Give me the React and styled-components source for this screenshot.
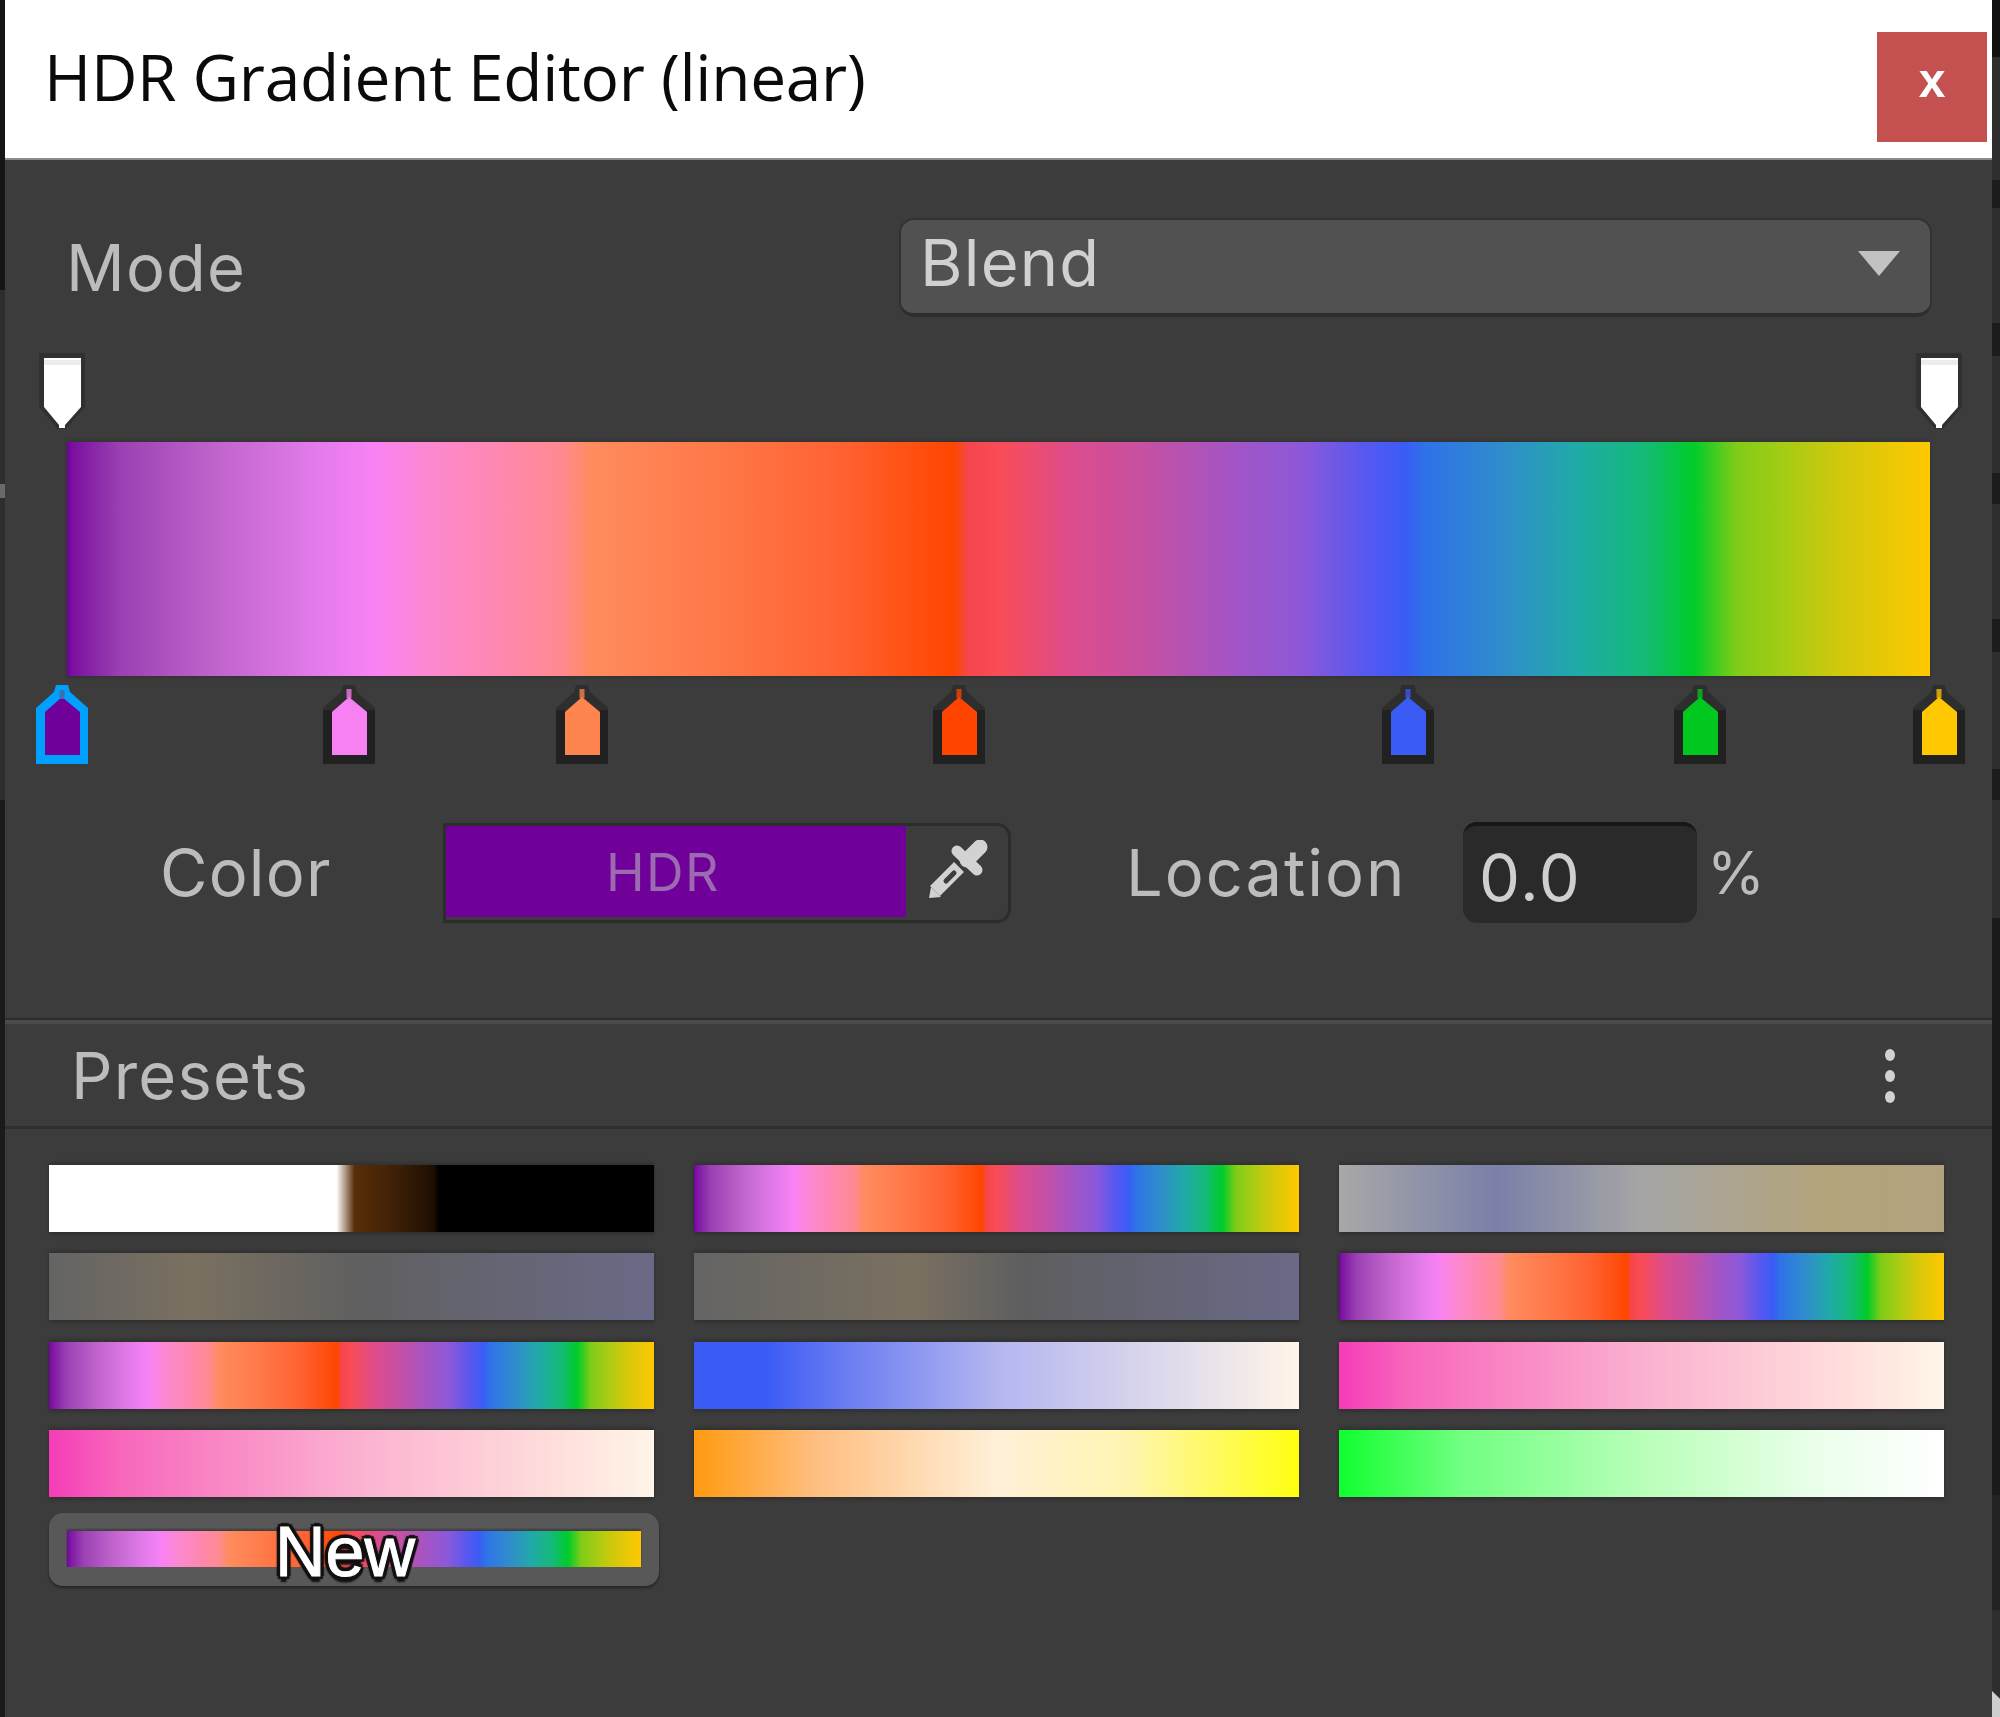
import React from "react";
import styled, { createGlobalStyle } from "styled-components";

const RAINBOW = `#6f0098 0%, #7a10a0 .3%, #9a40b2 2.8%, #c064cc 8%, #e07ae8 13%, #f882f5 16.4%, #fc88d0 19.4%, #ff88a8 24%, #ff8a90 26.6%, #ff8b5e 28.2%, #ff7848 35%, #ff6232 41.5%, #ff4600 47.6%, #f5464e 48.4%, #f94c56 50%, #dc4c8e 54%, #c850a0 57.5%, #a055c8 63%, #8e58d8 66.2%, #5858f0 69.6%, #3a5cf5 71.8%, #2f72e8 72.9%, #2f90c8 77.5%, #20aaa8 81%, #14ba78 84.6%, #00cc2a 87.3%, #80cc18 89.6%, #a8cc14 92.4%, #d4c80c 95.4%, #ffc800 100%`;
const grad = (stops) => `linear-gradient(90deg, ${stops})`;

const Global = createGlobalStyle`
  html, body { margin: 0; padding: 0; background: #3c3c3c; }
  * { box-sizing: border-box; }
`;

const Page = styled.div`
  width: 2000px;
  height: 1717px;
  display: grid;
  grid-template-columns: 5px 1987px 8px;
  overflow: hidden;
  filter: blur(0.7px);
`;

const Edge = styled.div`
  position: relative;
  height: 100%;
  background: ${(p) => p.$fill};
`;

const ResizeCorner = styled.div`
  position: absolute;
  right: 0;
  bottom: 0;
  width: 8px;
  height: 26px;
  background: #cfcfcf;
  clip-path: polygon(0 0, 100% 30%, 100% 100%, 0 100%);
`;

const EdgeTick = styled.div`
  position: absolute;
  left: 0;
  top: 484px;
  width: 5px;
  height: 14px;
  background: #6a6a6a;
`;

const Window = styled.div`
  display: flex;
  flex-direction: column;
  background: #3c3c3c;
  color: #c4c4c4;
  font-family: Inter, "Liberation Sans", sans-serif;
`;

const TitleBar = styled.header`
  height: 160px;
  background: #fff;
  display: flex;
  justify-content: space-between;
  align-items: flex-start;
  padding: 32px 5px 0 39px;
  border-bottom: 2px solid #8a8a8a;
`;

const Title = styled.h1`
  margin: 0;
  font: 400 64px/90px "Open Sans", sans-serif;
  letter-spacing: -0.3px;
  color: #0a0a0a;
`;

const CloseButton = styled.button`
  width: 110px;
  height: 110px;
  border: 0;
  padding: 0 0 12px;
  background: #c55050;
  color: #fff;
  font: 700 48px/1 "Liberation Sans", sans-serif;
`;

const ModeRow = styled.div`
  display: flex;
  justify-content: space-between;
  align-items: center;
  height: 99px;
  margin-top: 58px;
  padding: 0 60px 0 61px;
`;

const Label = styled.span`
  font-size: 65px;
  line-height: 1;
  font-weight: 400;
  letter-spacing: ${(p) => p.$spacing ?? 1.2}px;
  color: #bcbcbc;
`;

const ModeLabel = styled(Label)`
  margin-top: 0;
`;

const Dropdown = styled.div`
  width: 1033px;
  height: 99px;
  display: flex;
  align-items: center;
  justify-content: space-between;
  padding: 0 30px 8px 19px;
  background: #515151;
  border: 2px solid #323232;
  border-bottom: 4px solid #2e2e2e;
  border-radius: 15px;
  font-size: 65px;
  letter-spacing: 1.2px;
  color: #d0d0d0;
`;

const Caret = styled.i`
  width: 42px;
  height: 25px;
  margin-top: 2px;
  background: #c2c2c2;
  clip-path: polygon(0 0, 100% 0, 50% 100%);
`;

const Rail = styled.div`
  position: relative;
  height: ${(p) => p.$height}px;
`;

const Marker = styled.svg`
  position: absolute;
  top: ${(p) => p.$top}px;
  transform: translateX(-50%);
`;

const Bar = styled.div`
  height: 234px;
  margin: 0 62px;
  background: ${(p) => p.$fill};
  box-shadow: 0 -2px 3px rgba(0, 0, 0, 0.12), 0 2px 3px rgba(0, 0, 0, 0.14);
`;

const ColorRow = styled.div`
  display: flex;
  align-items: center;
  height: 101px;
  padding-left: 155px;
`;

const ColorLabel = styled(Label)`
  width: 283px;
`;

const ColorField = styled.div`
  width: 568px;
  height: 100px;
  display: flex;
  border: 3px solid #2c2c2c;
  border-radius: 0 14px 14px 0;
`;

const ColorSwatch = styled.div`
  width: 460px;
  margin-bottom: 3px;
  padding: 3px 26px 0 0;
  display: flex;
  align-items: center;
  justify-content: center;
  background: #70009a;
  color: #9c6aae;
  font-size: 52px;
  letter-spacing: 1.5px;
`;

const Picker = styled.svg`
  margin: 14px 0 0 22px;
`;

const LocationLabel = styled(Label)`
  width: 337px;
  margin-left: 115px;
`;

const NumberBox = styled.div`
  width: 234px;
  height: 101px;
  display: flex;
  align-items: center;
  padding: 6px 0 0 16px;
  background: #2a2a2a;
  border-top: 4px solid #171717;
  border-radius: 14px;
  font-size: 65px;
  letter-spacing: 1.6px;
  color: #cfcfcf;
`;

const Percent = styled(Label)`
  margin-left: 10px;
  font-size: 59px;
`;

const PresetsHeader = styled.div`
  height: 111px;
  margin-top: 95px;
  display: flex;
  align-items: center;
  justify-content: space-between;
  padding: 0 95px 0 66px;
  border-top: 2px solid #2b2b2b;
  border-bottom: 3px solid #2e2e2e;
  box-shadow: inset 0 4px 0 #4a4a4a;
`;

const PresetsLabel = styled(Label)`
  margin-top: 5px;
`;

const Dots = styled.svg`
  margin-top: 8px;
`;

const PresetGrid = styled.div`
  display: grid;
  grid-template-columns: repeat(3, 605px);
  grid-auto-rows: 67px;
  column-gap: 40px;
  row-gap: 21.3px;
  padding: 36px 0 0 44px;
`;

const Preset = styled.div`
  background: ${(p) => p.$fill};
  box-shadow: 0 -3px 3px rgba(0, 0, 0, 0.16), 0 3px 3px rgba(0, 0, 0, 0.18);
`;

const NewPreset = styled.button`
  position: relative;
  width: 610px;
  height: 73px;
  margin: 16px 0 0 44px;
  padding: 18px 18px;
  display: block;
  border: 0;
  border-radius: 14px;
  background: #585858;
  box-shadow: 0 2px 3px rgba(0, 0, 0, 0.4);
`;

const NewStrip = styled.div`
  height: 36px;
  background: ${(p) => p.$fill};
  box-shadow: 0 -2px 2px rgba(0, 0, 0, 0.3);
`;

const NewText = styled.span`
  position: absolute;
  left: 226px;
  top: 1px;
  font: 400 70px/76px "Liberation Sans", sans-serif;
  color: #fff;
  -webkit-text-stroke: 1px #fff;
  text-shadow: 3px 3px 1px #111, -3px 3px 1px #111, 3px -3px 1px #111, -3px -3px 1px #111, 0 6px 2px #111, 4px 0 1px #111, -4px 0 1px #111, 0 -4px 1px #111;
`;

function StopMarker({ x, color, selected }) {
  const body = selected ? "#00a0ff" : "#212121";
  const roof = selected ? "#00a0ff" : "#2e2e2e";
  return (
    <Marker $top={9} width="52" height="79" viewBox="0 0 52 79" style={{ left: x }}>
      <path d="M20 0H32L34 7L52 23V79H0V23L18 7Z" fill={roof} />
      <path d="M0 25H9V70H44V25H52V79H0Z" fill={body} />
      <path d="M26 12L44 27V70H9V27Z" fill={color} />
      <rect x="23.5" y={selected ? 5 : 4} width="5" height="9" fill={selected ? "#3c6fb0" : color} opacity={selected ? 1 : 0.75} />
    </Marker>
  );
}

function AlphaMarker({ x }) {
  return (
    <Marker $top={36} width="48" height="78" viewBox="0 0 48 78" style={{ left: x }}>
      <path d="M1 0H47V54L28 76H20L1 54Z" fill="#303030" />
      <path d="M6 5H43V54L27 72V75H21V72L6 54Z" fill="#fff" />
      <rect x="6" y="7" width="37" height="5" fill="#ececec" />
    </Marker>
  );
}

const STOPS = [
  { x: 57, color: "#70009a", selected: true },
  { x: 344, color: "#f781f3" },
  { x: 577, color: "#ff8550" },
  { x: 954, color: "#ff4400" },
  { x: 1403, color: "#3a5cf5" },
  { x: 1695, color: "#00c81e" },
  { x: 1934, color: "#ffc800" },
];

const GREY_A = "#646464 0%, #7a7060 23.5%, #606060 51%, #6a6a88 100%";
const GREY_B = "#646464 0%, #7a7060 36%, #5e5e60 55%, #6a6a88 100%";
const PINK = "#f53cb8 0%, #f868bc 12%, #fbb0d0 50%, #ffe0dc 85%, #fff5e8 100%";

const PRESETS = [
  "#fff 0%, #fff 47.5%, #5a2e08 50.5%, #3a1e06 58%, #1e0f02 63.5%, #000 64.5%, #000 100%",
  RAINBOW,
  "#a8a8a8 0%, #7a80a8 26%, #a5a5a5 49.6%, #b4a47c 80%, #b2a27e 100%",
  GREY_A,
  GREY_B,
  RAINBOW,
  RAINBOW,
  "#3a5cf5 0%, #3a5cf5 12%, #6a7cf2 25%, #b4b6f0 50%, #fff5e8 100%",
  PINK,
  PINK,
  "#ff9a10 0%, #ffbe80 20%, #fff0d8 50%, #fff5b0 72%, #ffff10 100%",
  "#10ff30 0%, #70ff80 20%, #b8ffb8 50%, #ecffec 80%, #fff 100%",
];

const LEFT_EDGE = "linear-gradient(180deg, #151515 0, #151515 290px, #2e2e2e 290px, #2e2e2e 800px, #1a1a1a 800px, #1a1a1a 100%)";
const RIGHT_EDGE = `linear-gradient(180deg, #111 0, #111 57px, #2e2e2e 57px, #2e2e2e 180px, #1c1c1c 180px, #1c1c1c 208px, #2e2e2e 208px, #2e2e2e 323px, #1c1c1c 323px, #1c1c1c 356px, #2e2e2e 356px, #2e2e2e 473px, #1c1c1c 473px, #1c1c1c 504px, #2e2e2e 504px, #2e2e2e 619px, #1c1c1c 619px, #1c1c1c 652px, #2e2e2e 652px, #2e2e2e 769px, #1c1c1c 769px, #1c1c1c 800px, #2e2e2e 800px, #2e2e2e 918px, #1a1a1a 918px, #1a1a1a 1495px, #222 1495px, #222 1610px, #2e2e2e 1610px, #2e2e2e 100%)`;

export default function App() {
  return (
    <>
      <Global />
      <Page>
        <Edge $fill={LEFT_EDGE}>
          <EdgeTick />
        </Edge>
        <Window>
          <TitleBar>
            <Title>HDR Gradient Editor (linear)</Title>
            <CloseButton>x</CloseButton>
          </TitleBar>
          <ModeRow>
            <ModeLabel>Mode</ModeLabel>
            <Dropdown>
              <span>Blend</span>
              <Caret />
            </Dropdown>
          </ModeRow>
          <Rail $height={125}>
            <AlphaMarker x={57} />
            <AlphaMarker x={1934} />
          </Rail>
          <Bar $fill={grad(RAINBOW)} />
          <Rail $height={146}>
            {STOPS.map((s) => (
              <StopMarker key={s.x} {...s} />
            ))}
          </Rail>
          <ColorRow>
            <ColorLabel>Color</ColorLabel>
            <ColorField>
              <ColorSwatch>HDR</ColorSwatch>
              <Picker width="60" height="60" viewBox="0 0 60 60" fill="none" strokeLinecap="round">
                <path d="M1 58L3 47L13 57Z" fill="#d2d2d2" />
                <path d="M7 51L31 27" stroke="#d2d2d2" strokeWidth="14" strokeLinecap="butt" />
                <path d="M18 41L26 33" stroke="#3c3c3c" strokeWidth="5" />
                <path d="M29 11L49 30" stroke="#d2d2d2" strokeWidth="11" />
                <path d="M39 20L52 7" stroke="#d2d2d2" strokeWidth="15" />
              </Picker>
            </ColorField>
            <LocationLabel $spacing={2}>Location</LocationLabel>
            <NumberBox>0.0</NumberBox>
            <Percent>%</Percent>
          </ColorRow>
          <PresetsHeader>
            <PresetsLabel>Presets</PresetsLabel>
            <Dots width="14" height="60" viewBox="0 0 14 60" fill="#d2d2d2">
              <ellipse cx="7" cy="8" rx="5" ry="6" />
              <ellipse cx="7" cy="29" rx="5" ry="6" />
              <ellipse cx="7" cy="50" rx="5" ry="6" />
            </Dots>
          </PresetsHeader>
          <PresetGrid>
            {PRESETS.map((p, i) => (
              <Preset key={i} $fill={grad(p)} />
            ))}
          </PresetGrid>
          <NewPreset>
            <NewStrip $fill={grad(RAINBOW)} />
            <NewText>New</NewText>
          </NewPreset>
        </Window>
        <Edge $fill={RIGHT_EDGE}>
          <ResizeCorner />
        </Edge>
      </Page>
    </>
  );
}
